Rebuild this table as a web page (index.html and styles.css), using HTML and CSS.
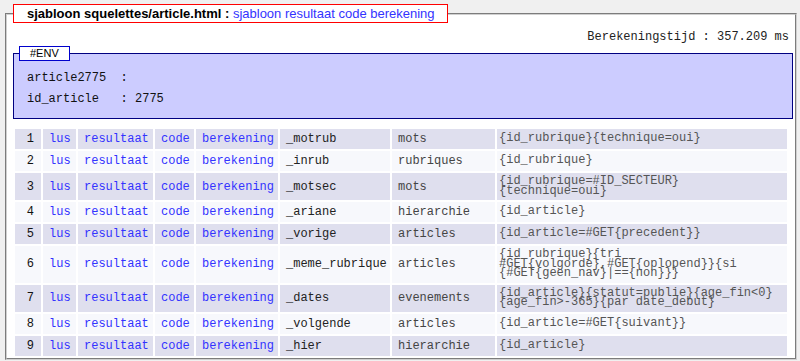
FILE: index.html
```html
<!DOCTYPE html>
<html lang="nl">
<head>
    <meta charset="UTF-8">
    <title>sjabloon squelettes/article.html</title>
    <link rel="stylesheet" href="styles.css">
</head>
<body>
    <fieldset class="debug">
        <legend class="debug-title"><b>sjabloon squelettes/article.html :</b> <a href="#">sjabloon resultaat code berekening</a></legend>

        <div class="timing">Berekeningstijd : 357.209 ms</div>

        <fieldset class="env">
            <legend class="env-title">#ENV</legend>
            <div class="env-body">
                <div class="env-row">article2775  :</div>
                <div class="env-row">id_article   : 2775</div>
            </div>
        </fieldset>

        <table class="loops">
            <colgroup>
                <col class="c-num"><col class="c-lus"><col class="c-res"><col class="c-code"><col class="c-ber"><col class="c-name"><col class="c-type"><col class="c-crit">
            </colgroup>
            <tr>
                <td class="num">1</td><td><a href="#">lus</a></td><td><a href="#">resultaat</a></td><td><a href="#">code</a></td><td><a href="#">berekening</a></td>
                <td class="name">_motrub</td><td class="type">mots</td><td class="crit">{id_rubrique}{technique=oui}</td>
            </tr>
            <tr>
                <td class="num">2</td><td><a href="#">lus</a></td><td><a href="#">resultaat</a></td><td><a href="#">code</a></td><td><a href="#">berekening</a></td>
                <td class="name">_inrub</td><td class="type">rubriques</td><td class="crit">{id_rubrique}</td>
            </tr>
            <tr>
                <td class="num">3</td><td><a href="#">lus</a></td><td><a href="#">resultaat</a></td><td><a href="#">code</a></td><td><a href="#">berekening</a></td>
                <td class="name">_motsec</td><td class="type">mots</td><td class="crit">{id_rubrique=#ID_SECTEUR}<br>{technique=oui}</td>
            </tr>
            <tr>
                <td class="num">4</td><td><a href="#">lus</a></td><td><a href="#">resultaat</a></td><td><a href="#">code</a></td><td><a href="#">berekening</a></td>
                <td class="name">_ariane</td><td class="type">hierarchie</td><td class="crit">{id_article}</td>
            </tr>
            <tr>
                <td class="num">5</td><td><a href="#">lus</a></td><td><a href="#">resultaat</a></td><td><a href="#">code</a></td><td><a href="#">berekening</a></td>
                <td class="name">_vorige</td><td class="type">articles</td><td class="crit">{id_article=#GET{precedent}}</td>
            </tr>
            <tr>
                <td class="num">6</td><td><a href="#">lus</a></td><td><a href="#">resultaat</a></td><td><a href="#">code</a></td><td><a href="#">berekening</a></td>
                <td class="name">_meme_rubrique</td><td class="type">articles</td><td class="crit">{id_rubrique}{tri<br>#GET{volgorde},#GET{oplopend}}{si<br>{#GET{geen_nav}|=={non}}}</td>
            </tr>
            <tr>
                <td class="num">7</td><td><a href="#">lus</a></td><td><a href="#">resultaat</a></td><td><a href="#">code</a></td><td><a href="#">berekening</a></td>
                <td class="name">_dates</td><td class="type">evenements</td><td class="crit">{id_article}{statut=publie}{age_fin&lt;0}<br>{age_fin&gt;-365}{par date_debut}</td>
            </tr>
            <tr>
                <td class="num">8</td><td><a href="#">lus</a></td><td><a href="#">resultaat</a></td><td><a href="#">code</a></td><td><a href="#">berekening</a></td>
                <td class="name">_volgende</td><td class="type">articles</td><td class="crit">{id_article=#GET{suivant}}</td>
            </tr>
            <tr>
                <td class="num">9</td><td><a href="#">lus</a></td><td><a href="#">resultaat</a></td><td><a href="#">code</a></td><td><a href="#">berekening</a></td>
                <td class="name">_hier</td><td class="type">hierarchie</td><td class="crit">{id_article}</td>
            </tr>
        </table>
    </fieldset>
</body>
</html>
```

FILE: styles.css
```css
body {
    margin: 0;
    padding: 4px 3px 0 5px;
    background: #f0f0f0;
    font-family: "Liberation Sans", Arial, sans-serif;
}

a {
    color: #33f;
    text-decoration: none;
}

.debug {
    margin: 0;
    padding: 0 2px 0 6px;
    background: #fff;
    border: 2px groove #d0d0d0;
}
.debug-title {
    margin-left: 0;
    padding: 0 12px 0 13px;
    height: 17px;
    line-height: 17px;
    font-size: 13px;
    color: #000;
    background: #fff;
    border: 1px solid #f00;
}

.timing {
    margin-top: 7px;
    padding-right: 4px;
    text-align: right;
    font-family: "Liberation Mono", "Courier New", monospace;
    font-size: 12px;
    line-height: 14px;
    color: #222;
}

.env {
    margin: 2px 0 0;
    padding: 0 5px;
    background: #ccf;
    border: 1px solid #000080;
}
.env-title {
    padding: 0 10px;
    height: 13px;
    line-height: 13px;
    font-size: 11px;
    background: #fff;
    border: 1px solid #00c;
}
.env-body {
    padding: 7px 0 8px 8px;
}
.env-row {
    height: 21px;
    line-height: 21px;
    white-space: pre;
    font-family: "Liberation Mono", "Courier New", monospace;
    font-size: 12px;
    color: #111;
}

.loops {
    margin-top: 8px;
    width: 776px;
    table-layout: fixed;
    border-spacing: 2px;
    font-family: "Liberation Mono", "Courier New", monospace;
    font-size: 12px;
}
.c-num { width: 26px; }
.c-lus { width: 33px; }
.c-res { width: 75px; }
.c-code { width: 39px; }
.c-ber { width: 82px; }
.c-name { width: 110px; }
.c-type { width: 103px; }
.c-crit { width: 290px; }

.loops td {
    padding: 3px 6px;
    line-height: 14px;
    white-space: nowrap;
    vertical-align: middle;
    overflow: hidden;
}
.loops tr:nth-child(odd) td {
    background: #dfdfee;
}
.loops tr:nth-child(even) td {
    background: #f7f8fc;
}
.loops .num {
    text-align: right;
    padding-right: 7px;
    color: #111;
}
.loops .name {
    color: #222;
}
.loops .type {
    color: #444;
}
.loops .crit {
    padding: 4px 2px;
    line-height: 9.5px;
    color: #555;
    overflow: visible;
}
```
